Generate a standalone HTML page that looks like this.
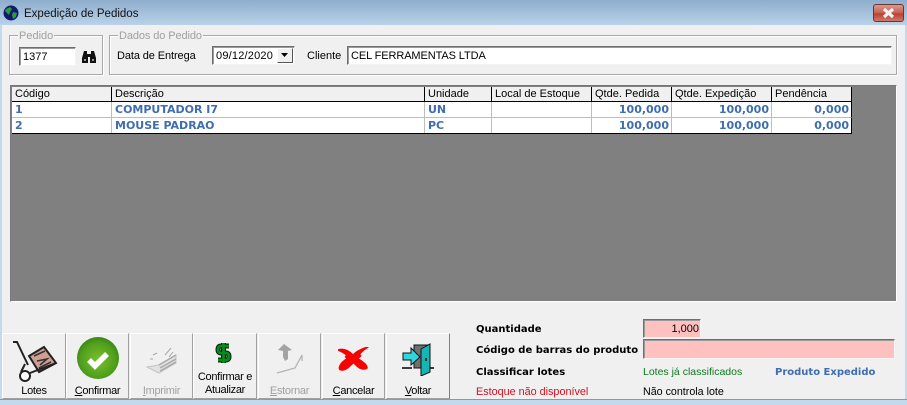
<!DOCTYPE html>
<html><head><meta charset="utf-8"><style>
html,body{margin:0;padding:0;width:907px;height:405px;overflow:hidden;background:#f0f0f0}
body{position:relative;font-family:"Liberation Sans",sans-serif;font-size:11px;color:#000}
div,span,svg{position:absolute;box-sizing:border-box}
span u{position:static}
.t{white-space:nowrap;line-height:13px;font-size:11px}
.grp{border:1px solid #a9a9a9;box-shadow:inset 1px 1px 0 #fff,1px 1px 0 #fff}
.leg{background:#f0f0f0;color:#a0a0a0;font-size:11px;padding:0 1px;line-height:13px;white-space:nowrap}
.edit{background:#fff;border:1px solid;border-color:#6e6e6e #f4f4f4 #f4f4f4 #6e6e6e;box-shadow:inset 1px 1px 0 #9a9a9a;font-size:11px;line-height:18px;padding-left:3px;white-space:nowrap}
.hd{top:87px;height:15px;font-size:11px;line-height:14px;padding-left:3px;white-space:nowrap;background:#f0f0f0;border-right:1px solid #000;border-bottom:1px solid #000}
.c{height:16px;background:#fff;border-right:1px solid #bdbdbd;border-bottom:1px solid #bdbdbd;font:bold 11px "DejaVu Sans",sans-serif;color:#3e6db0;line-height:15px;padding:0 3px;white-space:nowrap;overflow:hidden}
.r{text-align:right;padding-right:2px}
.btn{top:333px;height:66px;background:#f0f0f0;border:1px solid;border-color:#fff #a0a0a0 #a0a0a0 #fff}
.bl{left:0;right:0;text-align:center;font-size:11px;letter-spacing:-.3px;line-height:13px;white-space:nowrap}
.dis{color:#a0a0a0}
.b{font:bold 10px "DejaVu Sans",sans-serif;white-space:nowrap;line-height:13px}
</style></head><body>
<!-- title bar -->
<div style="left:0;top:0;width:907px;height:25px;background:linear-gradient(#8fadcc,#b9d2e9)"></div>
<div style="left:0;top:25px;width:2px;height:380px;background:#c5d9ec"></div>
<div style="left:905px;top:25px;width:2px;height:380px;background:#c5d9ec"></div>
<div style="left:0;top:400px;width:907px;height:5px;background:#c5d9ec"></div>
<div style="left:0;top:399px;width:907px;height:1px;background:#8a9aaa"></div>
<svg style="left:3px;top:5px" width="16" height="16" viewBox="0 0 16 16"><circle cx="8" cy="8" r="7.5" fill="#101a70"/><path d="M3 4l4-2 2 2-2 3-1 3-2-2-2-2zM10 7l4 1-1 4-3 2-1-4z" fill="#2f9a3a"/></svg>
<div class="t" style="left:24px;top:8px;font-size:11.5px;color:#111">Expedição de Pedidos</div>
<div style="left:873px;top:4px;width:31px;height:18px;border:1px solid #6b3530;border-radius:3px;background:linear-gradient(#d99a8e,#c75f50 50%,#b9402f 55%,#cf7a6a)"></div>
<svg style="left:873px;top:4px" width="31" height="18"><path d="M11 5l9 8M20 5l-9 8" stroke="#f2f0f0" stroke-width="3.2" fill="none"/></svg>

<!-- groups -->
<div class="grp" style="left:9px;top:35px;width:94px;height:40px"></div>
<div class="leg" style="left:18px;top:30px">Pedido</div>
<div class="edit" style="left:19px;top:47px;width:57px;height:19px">1377</div>
<svg style="left:81px;top:50px" width="16" height="14" viewBox="0 0 16 14"><path d="M3 1h3v3h4V1h3l2 7v5H9V7H7v6H1V8z" fill="#111"/><path d="M3 9h2v2H3zM11 9h2v2h-2z" fill="#999"/></svg>

<div class="grp" style="left:109px;top:35px;width:788px;height:40px"></div>
<div class="leg" style="left:118px;top:30px;letter-spacing:-.1px">Dados do Pedido</div>
<div class="t" style="left:117px;top:50px;letter-spacing:-.1px">Data de Entrega</div>
<div class="edit" style="left:212px;top:46px;width:83px;height:19px;letter-spacing:.2px">09/12/2020</div>
<div style="left:277px;top:48px;width:16px;height:15px;background:#f0f0f0;border:1px solid;border-color:#fff #555 #555 #fff"></div>
<svg style="left:281px;top:53px" width="8" height="5"><path d="M0 0h7L3.5 4z" fill="#000"/></svg>
<div class="t" style="left:307px;top:50px">Cliente</div>
<div class="edit" style="left:347px;top:46px;width:545px;height:19px;letter-spacing:-.1px">CEL FERRAMENTAS LTDA</div>

<!-- grid -->
<div style="left:10px;top:85px;width:887px;height:217px;background:#808080;border:1px solid;border-color:#777 #fff #fff #777"></div>
<div class="hd" style="left:12px;width:100px">Código</div>
<div class="hd" style="left:112px;width:313px">Descrição</div>
<div class="hd" style="left:425px;width:67px">Unidade</div>
<div class="hd" style="left:492px;width:100px">Local de Estoque</div>
<div class="hd" style="left:592px;width:80px">Qtde. Pedida</div>
<div class="hd" style="left:672px;width:100px">Qtde. Expedição</div>
<div class="hd" style="left:772px;width:80px">Pendência</div>

<div class="c" style="left:12px;top:102px;width:100px">1</div>
<div class="c" style="left:112px;top:102px;width:313px">COMPUTADOR I7</div>
<div class="c" style="left:425px;top:102px;width:67px">UN</div>
<div class="c" style="left:492px;top:102px;width:100px"></div>
<div class="c r" style="left:592px;top:102px;width:80px">100,000</div>
<div class="c r" style="left:672px;top:102px;width:100px">100,000</div>
<div class="c r" style="left:772px;top:102px;width:80px;border-right-color:#000">0,000</div>
<div class="c" style="left:12px;top:118px;width:100px">2</div>
<div class="c" style="left:112px;top:118px;width:313px">MOUSE PADRAO</div>
<div class="c" style="left:425px;top:118px;width:67px">PC</div>
<div class="c" style="left:492px;top:118px;width:100px"></div>
<div class="c r" style="left:592px;top:118px;width:80px">100,000</div>
<div class="c r" style="left:672px;top:118px;width:100px">100,000</div>
<div class="c r" style="left:772px;top:118px;width:80px;border-right-color:#000">0,000</div>
<div style="left:12px;top:133px;width:840px;height:1px;background:#000"></div>

<!-- buttons -->
<div class="btn" style="left:2px;width:64px"><div class="bl" style="top:51px">Lotes</div></div>
<div class="btn" style="left:66px;width:63px"><div class="bl" style="top:51px"><u>C</u>onfirmar</div></div>
<div class="btn dis" style="left:130px;width:63px"><div class="bl" style="top:51px"><u>I</u>mprimir</div></div>
<div class="btn" style="left:193px;width:64px"><div class="bl" style="top:37px">Confirmar e</div><div class="bl" style="top:50px">Atualizar</div></div>
<div class="btn dis" style="left:258px;width:63px"><div class="bl" style="top:51px"><u>E</u>stornar</div></div>
<div class="btn" style="left:322px;width:63px"><div class="bl" style="top:51px"><u>C</u>ancelar</div></div>
<div class="btn" style="left:386px;width:64px;border-right-color:#808080"><div class="bl" style="top:51px"><u>V</u>oltar</div></div>

<!-- button icons -->
<svg style="left:10px;top:340px" width="50" height="44" viewBox="0 0 50 44">
<path d="M3 2h4l11 23M15 24l-4 8" stroke="#222" stroke-width="2" fill="none"/>
<circle cx="15" cy="36" r="5" fill="#fff" stroke="#222" stroke-width="2"/>
<path d="M19 16l15-9 12 16-17 9z" fill="#cf9f93" stroke="#222" stroke-width="2"/>
<path d="M24 16l11-5M29 28l12-6M27 21l10-2-7 6" stroke="#333" stroke-width="1.6" fill="none"/>
<path d="M20 33l26-10" stroke="#222" stroke-width="2"/></svg>
<svg style="left:75px;top:335px" width="46" height="46" viewBox="0 0 46 46">
<defs><radialGradient id="g" cx=".5" cy=".55" r=".6"><stop offset="0" stop-color="#7cc22c"/><stop offset=".7" stop-color="#4f9e1c"/><stop offset="1" stop-color="#2f7d12"/></radialGradient></defs>
<circle cx="23" cy="23" r="21" fill="url(#g)"/>
<path d="M14 25l6 6 12-12" stroke="#fff" stroke-width="5.5" fill="none"/></svg>
<svg style="left:145px;top:347px" width="34" height="28" viewBox="0 0 34 28" fill="none" stroke="#c4c4c4">
<path d="M2 20l12 6 17-10V8L14 18z" fill="#e2e2e2"/><path d="M14 18l17-10M15 21l16-9M15 24l16-9" stroke="#a8a8a8" stroke-width="1.5"/><path d="M8 8l4-2M5 12h3M20 8l6-7M24 10l4-5" stroke="#a8a8a8"/></svg>
<svg style="left:215px;top:342px" width="17" height="22" viewBox="0 0 17 22" fill="none">
<path d="M14 4H6Q3 4 3 7.5T6 11h5q3 0 3 3.5T11 18H3M8.5 1v20" stroke="#03280a" stroke-width="5"/>
<path d="M14 4H6Q3 4 3 7.5T6 11h5q3 0 3 3.5T11 18H3M8.5 1v20" stroke="#0a8a1e" stroke-width="2.8"/></svg>
<svg style="left:274px;top:342px" width="34" height="36" viewBox="0 0 34 36" fill="none">
<path d="M4 8L10 2l8 6-4 1v8l-3 2-2-4V9z" fill="#a3a3a3"/>
<path d="M3 31l18-5 7-13v6" stroke="#b4b4b4" stroke-width="1.3"/></svg>
<svg style="left:338px;top:347px" width="31" height="24" viewBox="0 0 31 24">
<path d="M0 3C6 1 11 4 15 8C18 5 23 2 30 0C25 3 21 7 19 11C23 14 29 17 29 21C27 23 22 22 19 19L15 15C12 19 8 23 4 23C1 23 1 21 2 19C3 15 8 13 11 10C8 7 5 5 0 3z" fill="#f80000" stroke="#f80000" stroke-width="1.5" stroke-linejoin="round"/>
<path d="M8 8L23 19M22 7L8 20" stroke="#f80000" stroke-width="5" fill="none"/></svg>
<svg style="left:401px;top:340px" width="36" height="36" viewBox="0 0 36 36">
<path d="M1 28h10M28 28h5" stroke="#000" stroke-width="1.4"/>
<path d="M13 5h16v23H13z" fill="#707070" stroke="#111"/>
<path d="M20 9l9-5v28l-9 4z" fill="#15b5b5" stroke="#111"/>
<rect x="24" y="18" width="2" height="3" fill="#0a3a3a"/>
<path d="M2 13h8V8l9 9-9 8v-5H2z" fill="#30d5dd" stroke="#111"/></svg>

<!-- right panel -->
<div class="b" style="left:476px;top:323px">Quantidade</div>
<div class="edit" style="left:643px;top:319px;width:58px;height:19px;background:#ffc0c0;text-align:right;padding-right:1px">1,000</div>
<div class="b" style="left:476px;top:344px">Código de barras do produto</div>
<div class="edit" style="left:643px;top:339px;width:252px;height:20px;background:#ffc0c0"></div>
<div class="b" style="left:476px;top:366px">Classificar lotes</div>
<div class="t" style="left:643px;top:366px;color:#0a7a1e;font-size:10.5px">Lotes já classificados</div>
<div class="b" style="left:775px;top:366px;color:#3e6db0">Produto Expedido</div>
<div class="t" style="left:476px;top:386px;color:#d01020;font-size:10.8px">Estoque não disponível</div>
<div class="t" style="left:643px;top:386px;font-size:10.7px">Não controla lote</div>
</body></html>
